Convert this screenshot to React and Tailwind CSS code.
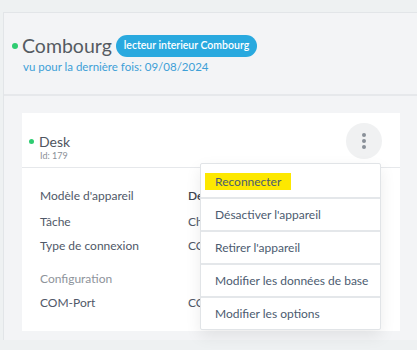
const rows = [
  { label: 'Modèle d\'appareil', value: 'Desk', bold: true, gap: 'mt-[19px]' },
  { label: 'Tâche', value: 'Check-in', gap: 'mt-[9px]' },
  { label: 'Type de connexion', value: 'COM', gap: 'mt-[7px]' },
];

const menu = [
  'Reconnecter',
  'Désactiver l\'appareil',
  'Retirer l\'appareil',
  'Modifier les données de base',
  'Modifier les options',
];

const Row = ({ label, value, bold, className }) => (
  <div className={`flex items-center h-[17px] text-[12px] text-[#505868] ${className}`}>
    <span className="w-[148px]">{label}</span>
    <span className={bold ? 'font-semibold text-[#3f4550]' : ''}>{value}</span>
  </div>
);

export default function App() {
  return (
    <div className="w-[417px] h-[350px] overflow-hidden bg-[#eef1f2] pt-[12px] pl-[3px]" style={{ fontFamily: 'Lato, "Open Sans", sans-serif' }}>
      <div className="h-[328px] w-[430px] bg-[#f3f4f6] border-l border-t border-[#e2e5e8]">
        <div className="h-[83px] border-b-2 border-[#e6e8eb] pl-[8px] pt-[21px]">
          <div className="flex items-center">
            <span className="w-[6px] h-[6px] rounded-full bg-[#2ecc71] mr-[4px]" />
            <span className="text-[19.5px] leading-[24px] text-[#555b62]">Combourg</span>
            <span className="ml-[4px] h-[22px] px-[8px] rounded-full bg-[#29a9df] text-white text-[10.5px] font-semibold flex items-center">lecteur interieur Combourg</span>
          </div>
          <div className="pl-[11px] mt-[2px] text-[11.5px] leading-[14px] text-[#3d9fd7]">vu pour la dernière fois: 09/08/2024</div>
        </div>
        <div className="pt-[17px] pl-[18px]">
          <div className="relative w-[378px] h-[218px] bg-white">
            <div className="h-[55px] border-b border-[#e6e8eb] flex items-start justify-between pl-[7px] pr-[18px]">
              <div className="mt-[20px]">
                <div className="flex items-center">
                  <span className="w-[5px] h-[5px] rounded-full bg-[#2ecc71] mr-[5px]" />
                  <span className="text-[14px] leading-[17px] text-[#4f5560]">Desk</span>
                </div>
                <div className="pl-[11px] text-[9px] leading-[11px] text-[#8b9098]">Id: 179</div>
              </div>
              <button className="mt-[10px] w-[36px] h-[36px] rounded-full bg-[#f0f1f2] flex flex-col items-center justify-center gap-[2px]">
                <span className="w-[4px] h-[4px] rounded-full bg-[#8a9099]" />
                <span className="w-[4px] h-[4px] rounded-full bg-[#8a9099]" />
                <span className="w-[4px] h-[4px] rounded-full bg-[#8a9099]" />
              </button>
            </div>
            <div className="pl-[18px]">
              {rows.map((r) => (
                <Row key={r.label} label={r.label} value={r.value} bold={r.bold} className={r.gap} />
              ))}
              <div className="mt-[16px] h-[17px] text-[12px] leading-[17px] text-[#8e939b]">Configuration</div>
              <Row label="COM-Port" value="COM3" className="mt-[7px]" />
            </div>
            <div className="absolute left-[178px] top-[50px] w-[181px] bg-white border border-[#e1e4e7] rounded-[2px] shadow-[0_6px_16px_rgba(0,0,0,0.08)]">
              {menu.map((m, i) => (
                <div key={m} className={`flex items-center px-[4px] ${i > 0 ? 'h-[33px] border-t-2 border-[#e4e7ea]' : 'h-[33px] pt-[2px]'}`}>
                  <span className={`whitespace-nowrap text-[12px] px-[10px] leading-[17px] text-[#4c5b70] ${i === 0 ? 'bg-[#fde800]' : ''}`}>{m}</span>
                </div>
              ))}
            </div>
          </div>
        </div>
      </div>
    </div>
  );
}
